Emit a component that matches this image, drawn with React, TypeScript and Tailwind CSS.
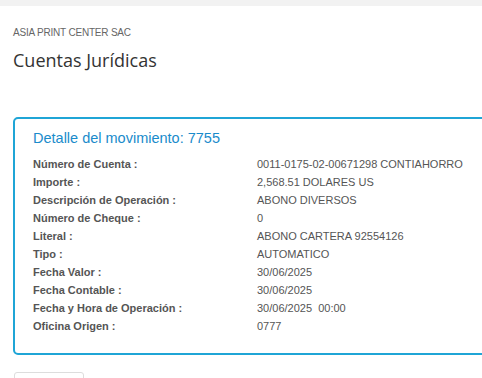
import React from "react";

const rows: [string, string][] = [
  ["Número de Cuenta :", "0011-0175-02-00671298 CONTIAHORRO"],
  ["Importe :", "2,568.51 DOLARES US"],
  ["Descripción de Operación :", "ABONO DIVERSOS"],
  ["Número de Cheque :", "0"],
  ["Literal :", "ABONO CARTERA 92554126"],
  ["Tipo :", "AUTOMATICO"],
  ["Fecha Valor :", "30/06/2025"],
  ["Fecha Contable :", "30/06/2025"],
  ["Fecha y Hora de Operación :", "30/06/2025\u00a0\u00a000:00"],
  ["Oficina Origen :", "0777"],
];

export default function App() {
  return (
    <div className="w-[482px] h-[378px] overflow-hidden bg-white" style={{ fontFamily: '"Liberation Sans", Arial, sans-serif' }}>
      <div className="h-[6px] bg-[#f2f2f2]" />
      <div className="pl-[13px]">
        <div className="mt-[21px] text-[10px] leading-[11px] text-[#666] tracking-[-0.2px]">ASIA PRINT CENTER SAC</div>
        <div className="mt-[10px] text-[18px] leading-[24px] text-[#333]" style={{ fontFamily: '"Open Sans", sans-serif' }}>Cuentas Jurídicas</div>
        <div className="mt-[45px] w-[520px] rounded-[5px] border-2 border-[#1fa5d6] pl-[18px] pt-[9px] pb-[18px]">
          <div className="text-[14.5px] leading-[20px] text-[#1a8bcb]">Detalle del movimiento: 7755</div>
          <div className="mt-[7px] flex flex-col">
            {rows.map(([l, v]) => (
              <div key={l} className="flex h-[18px] items-center text-[11px] text-[#555]">
                <div className="w-[224px] font-bold">{l}</div>
                <div>{v}</div>
              </div>
            ))}
          </div>
        </div>
        <div className="mt-[17px] ml-[1px] h-[20px] w-[70px] rounded-[3px] border border-[#ddd]" />
      </div>
    </div>
  );
}
